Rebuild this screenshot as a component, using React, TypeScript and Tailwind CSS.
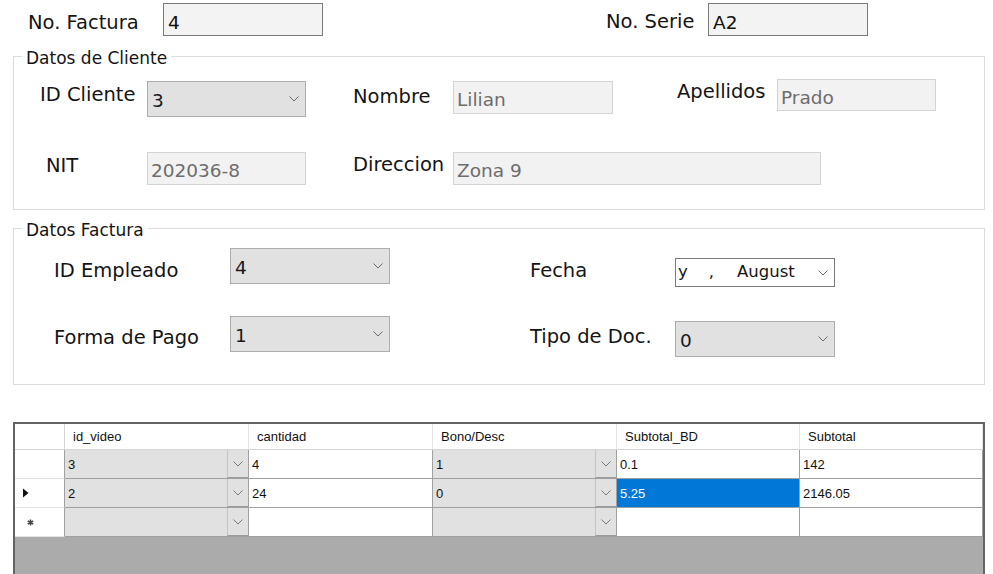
import type { ReactNode } from "react";

const Chevron = ({ color = "#6b6b6b" }: { color?: string }) => (
  <svg width="10" height="6" viewBox="0 0 10 6">
    <path d="M0.5 0.5 L5 5 L9.5 0.5" fill="none" stroke={color} strokeWidth="1" />
  </svg>
);

const Label = ({ children, className }: { children: ReactNode; className: string }) => (
  <div className={`shrink-0 whitespace-nowrap text-[19.5px] leading-none text-[#141414] ${className}`}>
    {children}
  </div>
);

const Combo = ({ value, className }: { value: string; className: string }) => (
  <div
    className={`flex shrink-0 items-start justify-between border border-[#adadad] bg-[#e1e1e1] pl-[4px] pr-[6px] ${className}`}
  >
    <span className="pt-[10px] text-[18.5px] leading-none text-[#1a1a1a]">{value}</span>
    <span className="self-center">
      <Chevron />
    </span>
  </div>
);

const ReadOnly = ({ value, className }: { value: string; className: string }) => (
  <div
    className={`shrink-0 border border-[#d4d4d4] bg-[#f2f2f2] pl-[3px] pt-[9px] text-[18.5px] leading-none text-[#6d6d6d] ${className}`}
  >
    {value}
  </div>
);

const Legend = ({ children }: { children: ReactNode }) => (
  <div className="ml-[8px] mt-[-7px] w-fit bg-white px-[4px] text-[17px] leading-none text-[#141414]">
    {children}
  </div>
);

const GridCombo = ({ value }: { value: string }) => (
  <div className="flex h-full border-r border-b border-[#a0a0a0] bg-[#e1e1e1]">
    <div className="flex flex-1 items-center pl-[3px]">{value}</div>
    <div className="flex w-[21px] items-center justify-center border-l border-[#c4c4c4] border-b border-b-[#9a9a9a]">
      <Chevron color="#7a7a7a" />
    </div>
  </div>
);

const Cell = ({ value, selected }: { value: string; selected?: boolean }) => (
  <div
    className={`flex h-full items-center border-r border-b border-[#a0a0a0] pl-[3px] ${
      selected ? "bg-[#0078d7] text-white" : "bg-white"
    }`}
  >
    {value}
  </div>
);

const RowHeader = ({ mark }: { mark?: "current" | "new" }) => (
  <div className="flex h-full items-center border-r border-r-[#a0a0a0] border-b border-b-[#e3e3e3] bg-white pl-[8px]">
    {mark === "current" && (
      <svg width="6" height="10" viewBox="0 0 6 10">
        <path d="M0 0.5 L5.5 5 L0 9.5 Z" fill="#111" />
      </svg>
    )}
    {mark === "new" && (
      <svg width="7" height="7" viewBox="0 0 7 7" className="ml-[4px]">
        <path d="M3.5 0.5 V6.5 M0.8 2 L6.2 5 M0.8 5 L6.2 2" stroke="#444" strokeWidth="1.5" />
      </svg>
    )}
  </div>
);

const rows = [
  { id: "3", cant: "4", bono: "1", bd: "0.1", sub: "142", mark: undefined },
  { id: "2", cant: "24", bono: "0", bd: "5.25", sub: "2146.05", mark: "current" as const },
  { id: "", cant: "", bono: "", bd: "", sub: "", mark: "new" as const },
];

export default function App() {
  return (
    <div className="h-[574px] w-[993px] overflow-hidden bg-white font-['DejaVu_Sans',sans-serif]">
      {/* encabezado */}
      <div className="flex items-start pt-[3px]">
        <Label className="ml-[28px] mt-[10px] w-[135px]">No. Factura</Label>
        <div className="h-[33px] w-[160px] shrink-0 border border-[#7a7a7a] bg-[#f3f3f3] pl-[4px] pt-[10px] text-[18.5px] leading-none text-[#111]">
          4
        </div>
        <Label className="ml-[283px] mt-[9px] w-[102px]">No. Serie</Label>
        <div className="h-[33px] w-[160px] shrink-0 border border-[#7a7a7a] bg-[#f3f3f3] pl-[4px] pt-[10px] text-[18.5px] leading-none text-[#111]">
          A2
        </div>
      </div>

      {/* Datos de Cliente */}
      <div className="ml-[13px] mt-[20px] h-[154px] w-[972px] border border-[#dcdcdc]">
        <Legend>Datos de Cliente</Legend>
        <div className="mt-[12px] flex items-start">
          <Label className="ml-[26px] mt-[6px] w-[107px]">ID Cliente</Label>
          <Combo value="3" className="mt-[2px] h-[36px] w-[159px]" />
          <Label className="ml-[47px] mt-[8px] w-[100px]">Nombre</Label>
          <ReadOnly value="Lilian" className="mt-[2px] h-[33px] w-[160px]" />
          <Label className="ml-[64px] mt-[3px] w-[100px]">Apellidos</Label>
          <ReadOnly value="Prado" className="h-[32px] w-[159px]" />
        </div>
        <div className="mt-[35px] flex items-start">
          <Label className="ml-[32px] mt-[4px] w-[101px]">NIT</Label>
          <ReadOnly value="202036-8" className="h-[33px] w-[159px]" />
          <Label className="ml-[47px] mt-[3px] w-[100px]">Direccion</Label>
          <ReadOnly value="Zona 9" className="h-[33px] w-[368px]" />
        </div>
      </div>

      {/* Datos Factura */}
      <div className="ml-[13px] mt-[18px] h-[157px] w-[972px] border border-[#dcdcdc]">
        <Legend>Datos Factura</Legend>
        <div className="mt-[9px] flex items-start">
          <Label className="ml-[40px] mt-[13px] w-[176px]">ID Empleado</Label>
          <Combo value="4" className="h-[36px] w-[160px]" />
          <Label className="ml-[140px] mt-[13px] w-[145px]">Fecha</Label>
          <div className="mt-[10px] flex h-[29px] w-[160px] shrink-0 items-center border border-[#7a7a7a] bg-white pl-[2px] pr-[6px] text-[16.5px] leading-none text-[#141414]">
            <span>y</span>
            <span className="ml-[21px]">,</span>
            <span className="ml-[23px]">August</span>
            <span className="ml-auto">
              <Chevron />
            </span>
          </div>
        </div>
        <div className="mt-[29px] flex items-start">
          <Label className="ml-[40px] mt-[12px] w-[176px]">Forma de Pago</Label>
          <Combo value="1" className="h-[36px] w-[160px]" />
          <Label className="ml-[140px] mt-[11px] w-[145px]">Tipo de Doc.</Label>
          <Combo value="0" className="mt-[5px] h-[36px] w-[160px]" />
        </div>
      </div>

      {/* detalle */}
      <div className="ml-[13px] mt-[37px] h-[170px] w-[972px] border-2 border-[#646464] bg-[#ababab] font-['Liberation_Sans',Arial,sans-serif] text-[13px] leading-none text-[#111]">
        <div className="grid grid-cols-[50px_184px_184px_184px_183px_1fr] grid-rows-[26px_29px_29px_29px]">
          <div className="border-r border-b border-[#d5d5d5] bg-white" />
          {["id_video", "cantidad", "Bono/Desc", "Subtotal_BD", "Subtotal"].map((h) => (
            <div
              key={h}
              className="flex items-center border-r border-r-[#e3e3e3] border-b border-b-[#d5d5d5] bg-white pl-[8px]"
            >
              {h}
            </div>
          ))}
          {rows.map((r, i) => (
            <div key={i} className="contents">
              <RowHeader mark={r.mark} />
              <GridCombo value={r.id} />
              <Cell value={r.cant} />
              <GridCombo value={r.bono} />
              <Cell value={r.bd} selected={i === 1} />
              <Cell value={r.sub} />
            </div>
          ))}
        </div>
      </div>
    </div>
  );
}
